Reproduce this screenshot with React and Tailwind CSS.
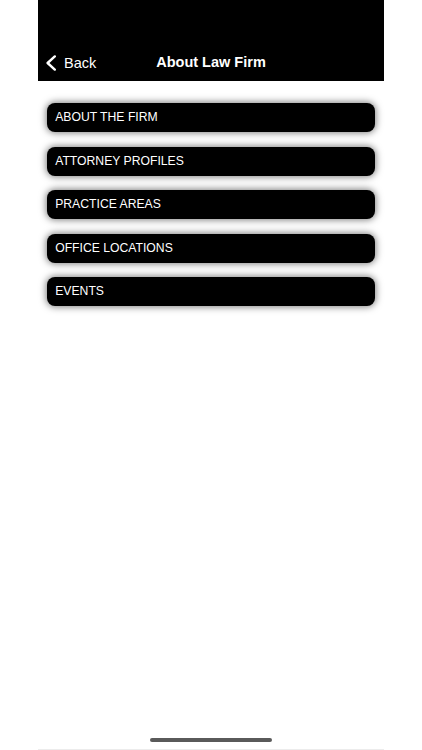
const items = [
  "ABOUT THE FIRM",
  "ATTORNEY PROFILES",
  "PRACTICE AREAS",
  "OFFICE LOCATIONS",
  "EVENTS",
]

const App = () => {
  return (
    <div className="w-full h-[750px] bg-white flex justify-center font-['Liberation_Sans',Arial,sans-serif] overflow-hidden">
      <div className="w-[346px] h-full flex flex-col">
        {/* barra de navegación */}
        <div className="h-[81px] bg-black flex items-end shrink-0">
          <div className="relative w-full h-[38px] flex items-center justify-center">
            <div className="absolute left-[8px] top-[12px] flex items-center text-white">
              <svg width="11" height="16" viewBox="0 0 11 16" fill="none" stroke="currentColor" strokeWidth="2.4" strokeLinecap="round" strokeLinejoin="round">
                <polyline points="8.8,1.4 1.6,8 8.8,14.6" />
              </svg>
              <span className="text-[14.5px] ml-[7px] leading-none">Back</span>
            </div>
            <h1 className="text-white text-[14.5px] font-bold pt-[1px]">About Law Firm</h1>
          </div>
        </div>

        {/* menú */}
        <div className="flex flex-col gap-[14.5px] px-[8.7px] pt-[22px]">
          {items.map((item) => (
            <button
              key={item}
              className="h-[29px] w-full bg-black rounded-[8px] text-left pl-[8.5px] text-white text-[12.2px] shadow-[0_0_7px_1px_rgba(0,0,0,0.5)]"
            >
              {item}
            </button>
          ))}
        </div>

        <div className="flex-1" />

        {/* indicador de inicio */}
        <div className="flex justify-center pb-[7px]">
          <div className="w-[122px] h-[4px] rounded-full bg-[#5a5a5a]" />
        </div>
        <div className="h-px bg-[#ececec]" />
      </div>
    </div>
  )
}

export default App
